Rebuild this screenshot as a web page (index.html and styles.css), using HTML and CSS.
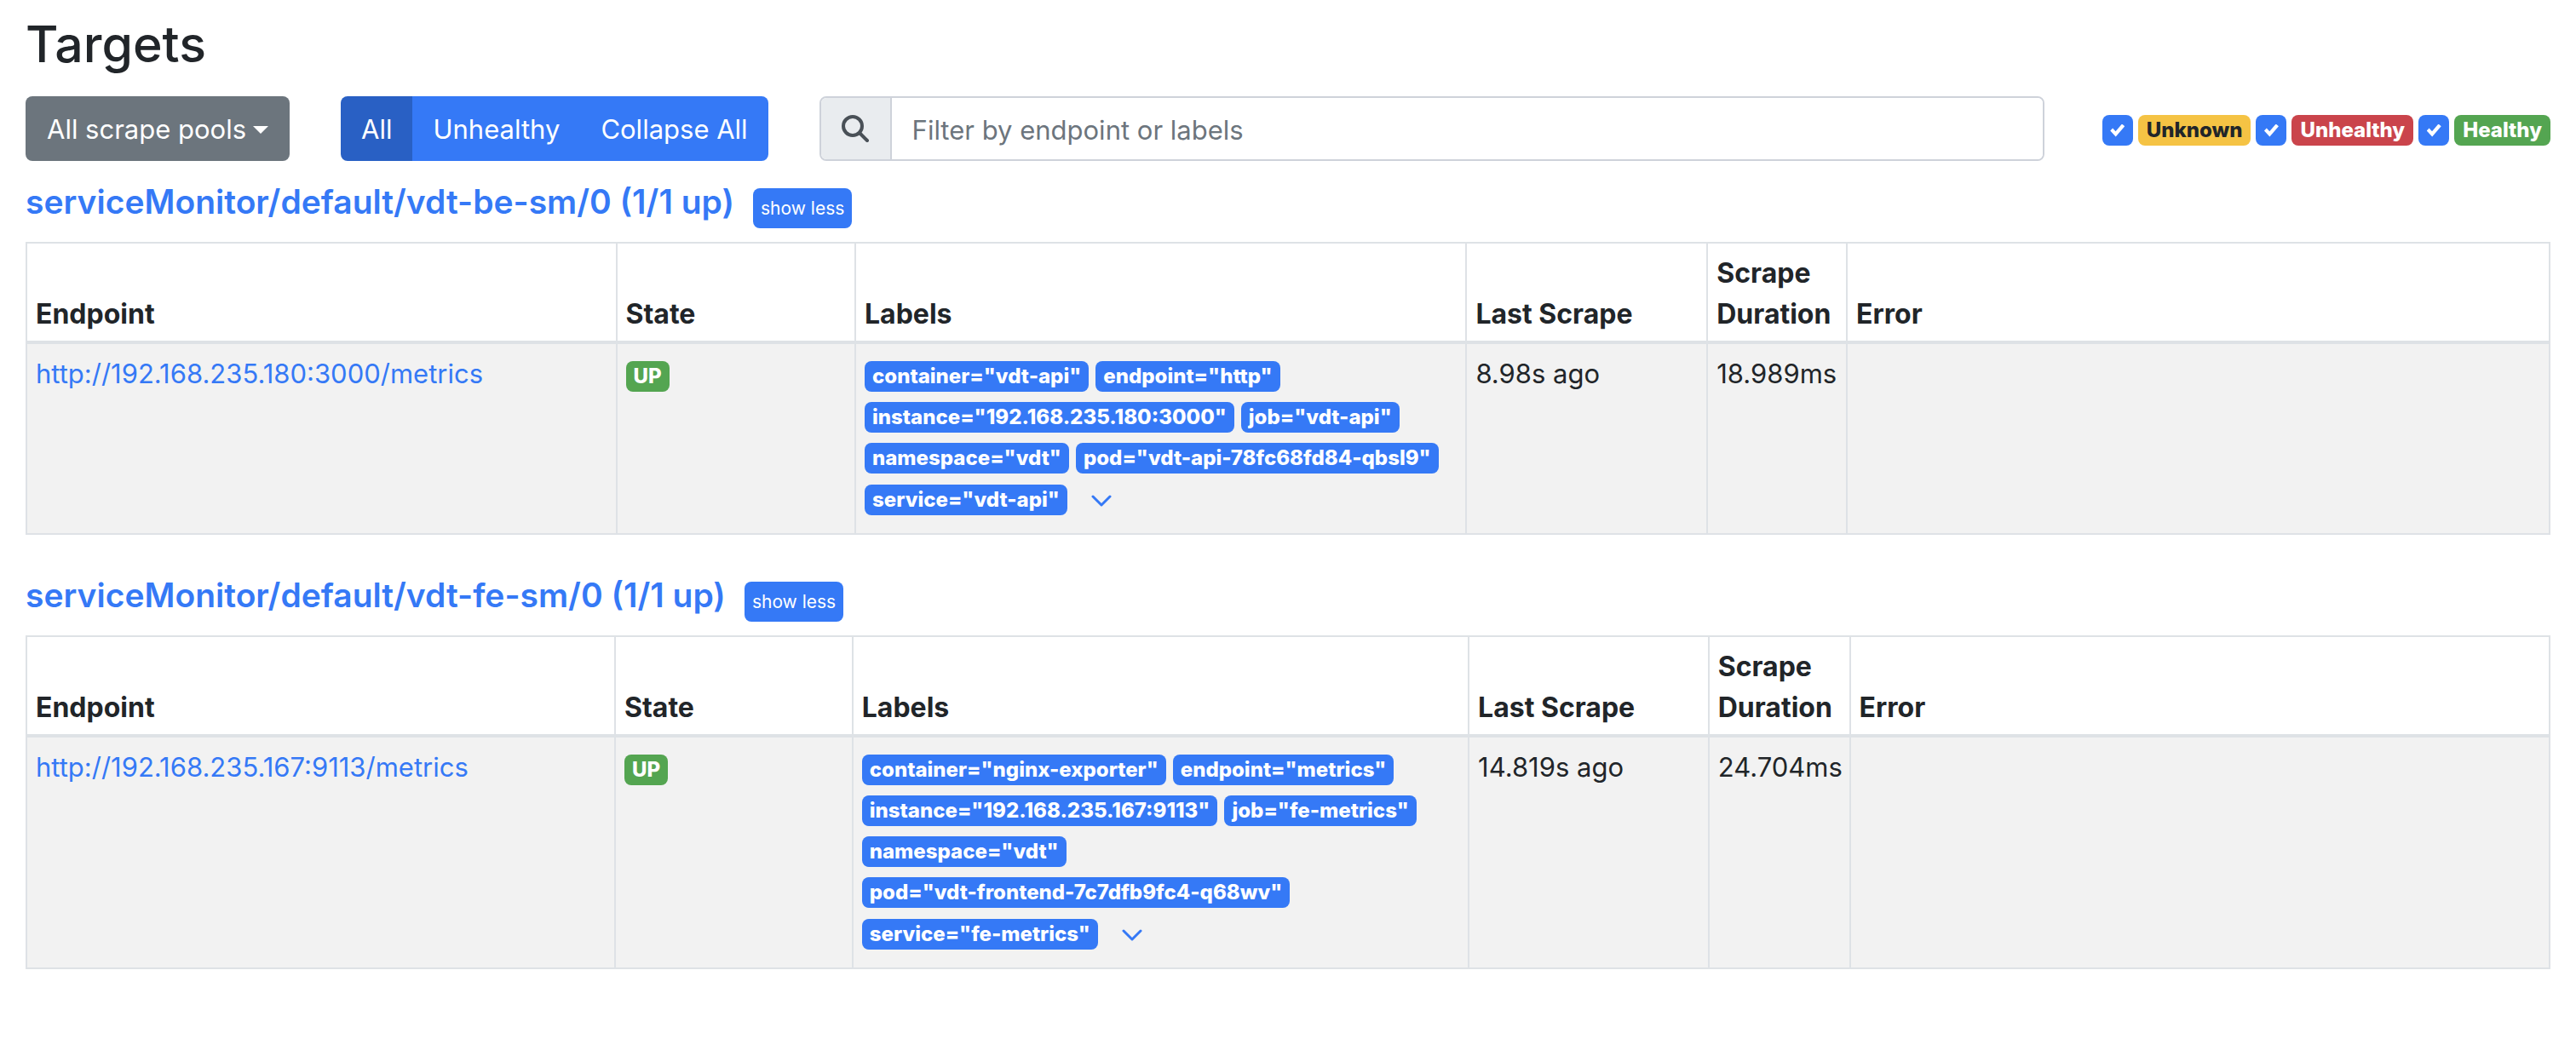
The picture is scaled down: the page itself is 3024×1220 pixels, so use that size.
FILE: index.html
```html
<!DOCTYPE html>
<html lang="en">
<head>
<meta charset="utf-8">
<meta name="viewport" content="width=device-width, initial-scale=1">
<title>Targets</title>
<link rel="stylesheet" href="styles.css">
</head>
<body>
<main class="page">
  <h1 class="page-title">Targets</h1>

  <div class="toolbar">
    <button type="button" class="btn btn-secondary" aria-haspopup="true">All scrape pools<span class="caret"></span></button>
    <div class="btn-group" role="group">
      <button type="button" class="btn btn-primary active">All</button>
      <button type="button" class="btn btn-primary">Unhealthy</button>
      <button type="button" class="btn btn-primary">Collapse All</button>
    </div>
    <div class="search">
      <label class="search-addon" for="filter" aria-label="Filter">
        <svg class="search-icon" viewBox="0 0 32 32" aria-hidden="true"><circle cx="13" cy="13" r="11"/><path d="M21 21l9 9"/></svg>
      </label>
      <input id="filter" class="search-input" type="text" placeholder="Filter by endpoint or labels">
    </div>
    <div class="state-filters">
      <input class="check" type="checkbox" id="unknown" checked><label class="badge badge-warning" for="unknown">Unknown</label>
      <input class="check" type="checkbox" id="unhealthy" checked><label class="badge badge-danger" for="unhealthy">Unhealthy</label>
      <input class="check" type="checkbox" id="healthy" checked><label class="badge badge-success" for="healthy">Healthy</label>
    </div>
  </div>

  <section class="pool">
    <h2 class="pool-title"><a href="#be" id="be">serviceMonitor/default/vdt-be-sm/0 (1/1 up)</a><button type="button" class="btn-xs">show less</button></h2>
    <table class="targets">
      <colgroup><col class="be-endpoint"><col class="be-state"><col class="be-labels"><col class="be-last"><col class="be-duration"><col></colgroup>
      <thead>
        <tr><th>Endpoint</th><th>State</th><th>Labels</th><th>Last Scrape</th><th>Scrape Duration</th><th>Error</th></tr>
      </thead>
      <tbody>
        <tr>
          <td><a href="#be">http://192.168.235.180:3000/metrics</a></td>
          <td><span class="badge badge-success">UP</span></td>
          <td>
            <div class="labels">
              <span class="badge badge-primary">container="vdt-api"</span>
              <span class="badge badge-primary">endpoint="http"</span>
              <span class="badge badge-primary">instance="192.168.235.180:3000"</span>
              <span class="badge badge-primary">job="vdt-api"</span>
              <span class="badge badge-primary">namespace="vdt"</span>
              <span class="badge badge-primary">pod="vdt-api-78fc68fd84-qbsl9"</span>
              <span class="badge badge-primary">service="vdt-api"</span>
              <button type="button" class="expand" aria-label="Show discovered labels"><svg class="chevron" viewBox="0 0 24 14" aria-hidden="true"><path d="M2 2l10 10L22 2"/></svg></button>
            </div>
          </td>
          <td>8.98s ago</td>
          <td>18.989ms</td>
          <td></td>
        </tr>
      </tbody>
    </table>
  </section>

  <section class="pool">
    <h2 class="pool-title"><a href="#fe" id="fe">serviceMonitor/default/vdt-fe-sm/0 (1/1 up)</a><button type="button" class="btn-xs">show less</button></h2>
    <table class="targets">
      <colgroup><col class="fe-endpoint"><col class="fe-state"><col class="fe-labels"><col class="fe-last"><col class="fe-duration"><col></colgroup>
      <thead>
        <tr><th>Endpoint</th><th>State</th><th>Labels</th><th>Last Scrape</th><th>Scrape Duration</th><th>Error</th></tr>
      </thead>
      <tbody>
        <tr>
          <td><a href="#fe">http://192.168.235.167:9113/metrics</a></td>
          <td><span class="badge badge-success">UP</span></td>
          <td>
            <div class="labels">
              <span class="badge badge-primary">container="nginx-exporter"</span>
              <span class="badge badge-primary">endpoint="metrics"</span>
              <span class="badge badge-primary">instance="192.168.235.167:9113"</span>
              <span class="badge badge-primary">job="fe-metrics"</span>
              <span class="badge badge-primary">namespace="vdt"</span>
              <span class="badge badge-primary">pod="vdt-frontend-7c7dfb9fc4-q68wv"</span>
              <span class="badge badge-primary">service="fe-metrics"</span>
              <button type="button" class="expand" aria-label="Show discovered labels"><svg class="chevron" viewBox="0 0 24 14" aria-hidden="true"><path d="M2 2l10 10L22 2"/></svg></button>
            </div>
          </td>
          <td>14.819s ago</td>
          <td>24.704ms</td>
          <td></td>
        </tr>
      </tbody>
    </table>
  </section>
</main>
</body>
</html>
```
FILE: styles.css
```css
*,
*::before,
*::after {
  box-sizing: border-box;
}

body {
  margin: 0;
  background: #fff;
  color: #212529;
  font-family: Inter, "Liberation Sans", sans-serif;
  font-size: 31px;
  line-height: 48px;
}

button,
input {
  margin: 0;
  font-family: inherit;
}

button {
  cursor: pointer;
}

a {
  color: #3579f6;
  text-decoration: none;
}

.page {
  padding: 13px 30px;
}

.page-title {
  margin: 0 0 23px;
  font-size: 59px;
  font-weight: 500;
  line-height: 77px;
}

/* Toolbar */
.toolbar {
  display: flex;
  align-items: center;
}

.btn {
  height: 76px;
  padding: 2px 25px 0;
  border: 0;
  border-radius: 8px;
  color: #fff;
  font-size: 31px;
  line-height: 48px;
  white-space: nowrap;
}

.btn-secondary {
  display: flex;
  align-items: center;
  gap: 8px;
  background: #6c757d;
}

.caret {
  border: 9px solid transparent;
  border-top-color: #fff;
  border-bottom: 0;
}

.btn-group {
  display: flex;
  margin-left: 60px;
}

.btn-primary {
  background: #3579f6;
}

.btn-primary.active {
  background: #2960c4;
}

.btn-group .btn {
  padding: 2px 24px 0;
}

.btn-group .btn:not(:last-child) {
  border-top-right-radius: 0;
  border-bottom-right-radius: 0;
}

.btn-group .btn:not(:first-child) {
  border-top-left-radius: 0;
  border-bottom-left-radius: 0;
}

.search {
  display: flex;
  flex: 1;
  min-width: 0;
  height: 76px;
  margin: 0 68px 0 60px;
  border: 2px solid #ced2da;
  border-radius: 8px;
  overflow: hidden;
}

.search-addon {
  display: flex;
  align-items: center;
  justify-content: center;
  flex: none;
  width: 83px;
  border-right: 2px solid #ced2da;
  background: #e9ecef;
  color: #495057;
}

.search-icon {
  width: 32px;
  height: 32px;
  fill: none;
  stroke: currentColor;
  stroke-width: 4;
  stroke-linecap: round;
}

.search-input {
  flex: 1;
  min-width: 0;
  padding: 2px 24px 0;
  border: 0;
  outline: 0;
  background: #fff;
  color: #495057;
  font-size: 31px;
}

.search-input::placeholder {
  color: #6c757d;
  opacity: 1;
}

.state-filters {
  display: flex;
  align-items: center;
  gap: 6px;
  padding-top: 4px;
}

.check {
  appearance: none;
  width: 36px;
  height: 36px;
  border-radius: 8px;
  background: #3579f6;
  display: grid;
  place-items: center;
}

.check:checked::before {
  content: "";
  width: 17px;
  height: 15px;
  background: #fff;
  clip-path: polygon(0 54%, 17% 34%, 37% 58%, 81% 0, 100% 18%, 38% 100%);
}

/* Badges */
.badge {
  display: inline-block;
  height: 36px;
  padding: 6px 9px;
  border-radius: 8px;
  color: #fff;
  font-size: 24px;
  font-weight: 800;
  line-height: 24px;
  white-space: nowrap;
}

.state-filters .badge {
  padding: 6px 10px;
}

.badge-primary {
  background: #3579f6;
}

.badge-success {
  background: #54a551;
}

.badge-danger {
  background: #ca444b;
}

.badge-warning {
  background: #f5c344;
  color: #212529;
}

/* Scrape pools */
.pool {
  margin-bottom: 47px;
}

.pool-title {
  display: flex;
  align-items: flex-end;
  gap: 22px;
  margin: 0 0 16px;
  font-size: 39px;
  font-weight: 600;
  line-height: 48px;
}

.pool-title a {
  padding-bottom: 7px;
}

.toolbar + .pool {
  margin-top: 24px;
}

.btn-xs {
  height: 47px;
  padding: 0 9px;
  border: 0;
  border-radius: 8px;
  background: #3579f6;
  color: #fff;
  font-size: 21px;
  line-height: 32px;
  white-space: nowrap;
}

.targets {
  width: 100%;
  border-collapse: collapse;
  table-layout: fixed;
}

.targets th,
.targets td {
  padding: 11px 10px 7px;
  border: 2px solid #dee2e6;
  text-align: left;
}

.targets th {
  border-bottom-width: 4px;
  font-size: 32px;
  font-weight: 700;
  vertical-align: bottom;
}

.targets td {
  background: #f2f2f2;
  vertical-align: top;
}

.be-endpoint { width: 23.38%; }
.be-state { width: 9.47%; }
.be-labels { width: 24.22%; }
.be-last { width: 9.55%; }
.be-duration { width: 5.53%; }

.fe-endpoint { width: 23.33%; }
.fe-state { width: 9.41%; }
.fe-labels { width: 24.42%; }
.fe-last { width: 9.51%; }
.fe-duration { width: 5.6%; }

.labels {
  display: flex;
  flex-wrap: wrap;
  align-items: center;
  gap: 12px 8px;
  padding: 9px 0 13px;
}

.expand {
  display: flex;
  align-items: center;
  height: 38px;
  padding: 2px 20px 0;
  border: 0;
  background: none;
  color: #3579f6;
}

.chevron {
  width: 24px;
  height: 14px;
  fill: none;
  stroke: currentColor;
  stroke-width: 3;
  stroke-linecap: round;
  stroke-linejoin: round;
}
```
